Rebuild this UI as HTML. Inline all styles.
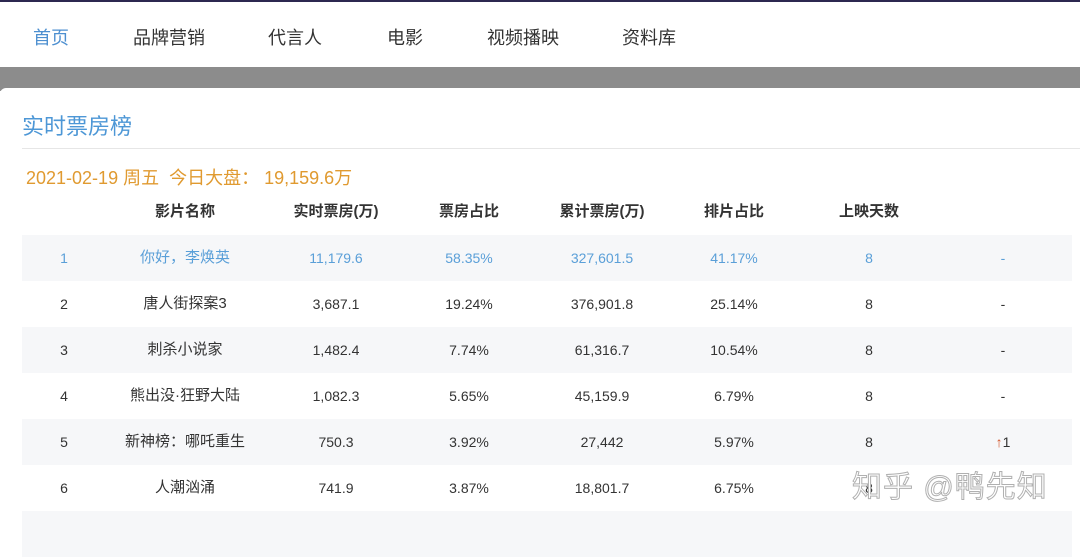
<!DOCTYPE html>
<html><head><meta charset="utf-8"><style>
*{margin:0;padding:0;box-sizing:border-box}
body{width:1080px;height:524px;overflow:hidden;background:#fff;font-family:"Liberation Sans","Noto Sans CJK SC",sans-serif;position:relative}
.top{position:absolute;left:0;top:0;width:1080px;height:2px;background:#2c2850}
.nav{position:absolute;top:0;left:0;width:1080px;height:67px;font-size:18px;color:#333}
.nav span{position:absolute;top:24px}
.gray{position:absolute;top:67px;left:0;width:1080px;height:24px;background:#8c8c8c}
.card{position:absolute;top:88px;left:0;width:1080px;height:436px;background:#fff;border-top-left-radius:6px}
.title{position:absolute;left:22px;top:109px;font-size:22px;color:#4d97d6}
.line{position:absolute;left:22px;top:148px;width:1058px;height:1px;background:#e6e6e6}
.date{position:absolute;left:26px;top:164px;font-size:18px;color:#e09a30}
.tbl{position:absolute;left:22px;top:189px;width:1050px}
.row{position:relative;height:46px;font-size:14px;color:#333}
.row span{position:absolute;top:0;line-height:46px;transform:translateX(-50%);white-space:nowrap}
.row span:nth-child(2){font-size:15px}
.hd{font-size:15px;font-weight:bold;color:#333}
.g{background:#f6f7f9}
.b{color:#5a9fd8}
.wm{position:absolute;left:852px;top:462px;font-size:30px;color:#fff;-webkit-text-stroke:1px #b0b0b0;letter-spacing:1px}
</style></head><body>
<div class="nav">
<span style="left:33px;color:#4d8fd0">首页</span>
<span style="left:133px">品牌营销</span>
<span style="left:268px">代言人</span>
<span style="left:387px">电影</span>
<span style="left:487px">视频播映</span>
<span style="left:622px">资料库</span>
</div>
<div class="top"></div>
<div class="gray"></div>
<div class="card"></div>
<div class="title">实时票房榜</div>
<div class="line"></div>
<div class="date">2021-02-19 周五 &nbsp;今日大盘： 19,159.6万</div>
<div class="tbl">
<div class="row hd"><span style="left:42px"></span><span style="left:163px">影片名称</span><span style="left:314px">实时票房(万)</span><span style="left:447px">票房占比</span><span style="left:580px">累计票房(万)</span><span style="left:712px">排片占比</span><span style="left:847px">上映天数</span></div>
<div class="row g b"><span style="left:42px">1</span><span style="left:163px">你好，李焕英</span><span style="left:314px">11,179.6</span><span style="left:447px">58.35%</span><span style="left:580px">327,601.5</span><span style="left:712px">41.17%</span><span style="left:847px">8</span><span style="left:981px">-</span></div>
<div class="row"><span style="left:42px">2</span><span style="left:163px">唐人街探案3</span><span style="left:314px">3,687.1</span><span style="left:447px">19.24%</span><span style="left:580px">376,901.8</span><span style="left:712px">25.14%</span><span style="left:847px">8</span><span style="left:981px">-</span></div>
<div class="row g"><span style="left:42px">3</span><span style="left:163px">刺杀小说家</span><span style="left:314px">1,482.4</span><span style="left:447px">7.74%</span><span style="left:580px">61,316.7</span><span style="left:712px">10.54%</span><span style="left:847px">8</span><span style="left:981px">-</span></div>
<div class="row"><span style="left:42px">4</span><span style="left:163px">熊出没·狂野大陆</span><span style="left:314px">1,082.3</span><span style="left:447px">5.65%</span><span style="left:580px">45,159.9</span><span style="left:712px">6.79%</span><span style="left:847px">8</span><span style="left:981px">-</span></div>
<div class="row g"><span style="left:42px">5</span><span style="left:163px">新神榜：哪吒重生</span><span style="left:314px">750.3</span><span style="left:447px">3.92%</span><span style="left:580px">27,442</span><span style="left:712px">5.97%</span><span style="left:847px">8</span><span style="left:981px"><b style="color:#d2552a">↑</b>1</span></div>
<div class="row"><span style="left:42px">6</span><span style="left:163px">人潮汹涌</span><span style="left:314px">741.9</span><span style="left:447px">3.87%</span><span style="left:580px">18,801.7</span><span style="left:712px">6.75%</span><span style="left:847px">8</span><span style="left:981px"></span></div>
<div class="row g"></div>
</div>
<div class="wm">知乎 @鸭先知</div>
</body></html>
